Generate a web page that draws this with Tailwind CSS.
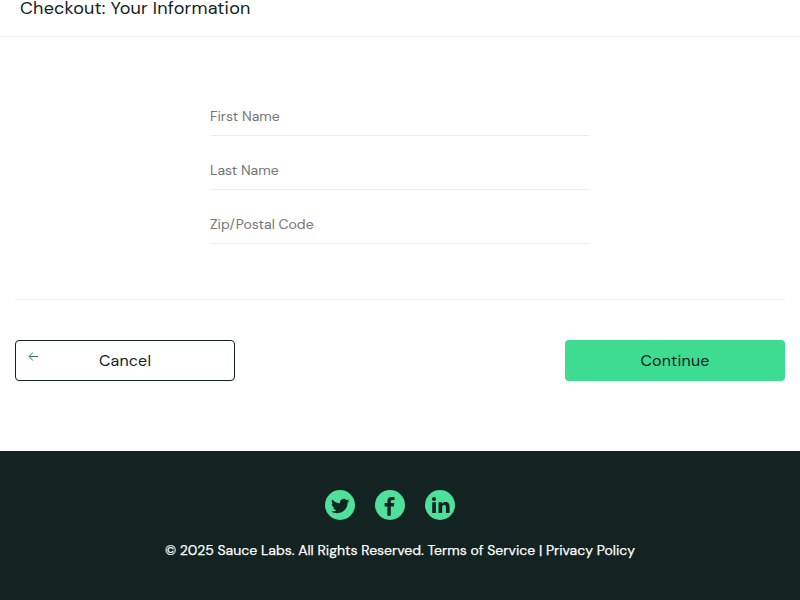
<!DOCTYPE html>
<html lang="en">
<head>
<meta charset="utf-8">
<title>Checkout</title>
<script src="https://cdn.jsdelivr.net/npm/@tailwindcss/browser@4"></script>
</head>
<body class="h-[600px] overflow-hidden bg-white font-['DM_Sans',Inter,sans-serif] text-[#132322] flex flex-col">
<header class="h-[37px] shrink-0 border-b border-[#ededed] pl-5">
  <h1 class="h-4 leading-4 text-[18px] tracking-[0.19px] whitespace-nowrap">Checkout: Your Information</h1>
</header>
<main class="px-[15px] h-[414px] shrink-0">
  <form>
    <div class="mx-auto w-[380px] pt-[61px] h-[262px] flex flex-col gap-[16px]">
      <input class="block h-[38px] w-full pb-[2px] border-b border-[#ededed] text-[14px] placeholder:text-[#757575] outline-none" placeholder="First Name">
      <input class="block h-[38px] w-full pb-[2px] border-b border-[#ededed] text-[14px] placeholder:text-[#757575] outline-none" placeholder="Last Name">
      <input class="block h-[38px] w-full pb-[2px] border-b border-[#ededed] text-[14px] placeholder:text-[#757575] outline-none" placeholder="Zip/Postal Code">
    </div>
    <div class="flex justify-between border-t border-[#ededed] pt-10">
      <button type="button" class="relative h-[41px] w-[220px] rounded-[4px] border border-[#132322] text-[16px] tracking-[0.18px]">
        <svg class="absolute left-[12px] top-[10px]" width="12" height="12" viewBox="0 0 12 12" fill="none" stroke="#27775a" stroke-width="1"><path d="M10 5.500H1.500M4.900 1.500L1.100 5.500L4.900 9.500"/></svg>
        <span>Cancel</span>
      </button>
      <button type="button" class="h-[41px] w-[220px] rounded-[4px] bg-[#3ddc91] text-[16px] tracking-[0.18px]"><span>Continue</span></button>
    </div>
  </form>
</main>
<footer class="h-[149px] shrink-0 bg-[#132322] pt-[39px]">
  <ul class="flex w-[780px] justify-center gap-5">
    <li><svg class="block" width="30" height="30" viewBox="0 0 30 30"><circle cx="15" cy="15" r="15" fill="#4fe09a"/><path transform="translate(6 7.300) scale(.77 .73)" fill="#132322" d="M23.953 4.57a10 10 0 01-2.825.775 4.958 4.958 0 002.163-2.723c-.951.555-2.005.959-3.127 1.184a4.92 4.92 0 00-8.384 4.482C7.69 8.095 4.067 6.13 1.64 3.162a4.822 4.822 0 00-.666 2.475c0 1.71.87 3.213 2.188 4.096a4.904 4.904 0 01-2.228-.616v.06a4.923 4.923 0 003.946 4.827 4.996 4.996 0 01-2.212.085 4.936 4.936 0 004.604 3.417 9.867 9.867 0 01-6.102 2.105c-.39 0-.779-.023-1.170-.067a13.995 13.995 0 007.557 2.209c9.053 0 13.998-7.496 13.998-13.985 0-.21 0-.42-.015-.63A9.935 9.935 0 0024 4.590z"/></svg></li>
    <li><svg class="block" width="30" height="30" viewBox="0 0 30 30"><circle cx="15" cy="15" r="15" fill="#4fe09a"/><path fill="#132322" d="M12.400 25.700v-9.300H9.600v-3.500h2.800v-2C12.400 8.200 14 6.900 16.600 6.900c1.300 0 2.400.1 2.900.2v3h-1.900c-1.500 0-1.800.7-1.800 1.600v1.200h3.500l-.5 3.500h-3v9.300z"/></svg></li>
    <li><svg class="block" width="30" height="30" viewBox="0 0 30 30"><circle cx="15" cy="15" r="15" fill="#4fe09a"/><circle cx="9" cy="8.900" r="2" fill="#132322"/><path fill="#132322" d="M7.200 12.300h3.700V22.900H7.200zM13.500 12.300h3.500v1.400c.7-1 1.800-1.700 3.300-1.700 3.300 0 4.300 2.100 4.300 4.900v6h-3.700v-5.200c0-1.300 0-2.600-1.600-2.600-1.800 0-2.100 1.300-2.100 2.600v5.200h-3.700z"/></svg></li>
  </ul>
  <p class="mt-[19px] text-center text-[14px] leading-[22px] text-white [-webkit-text-stroke:0.25px_white] whitespace-nowrap">© 2025 Sauce Labs. All Rights Reserved. Terms of Service | Privacy Policy</p>
</footer>
</body>
</html>
